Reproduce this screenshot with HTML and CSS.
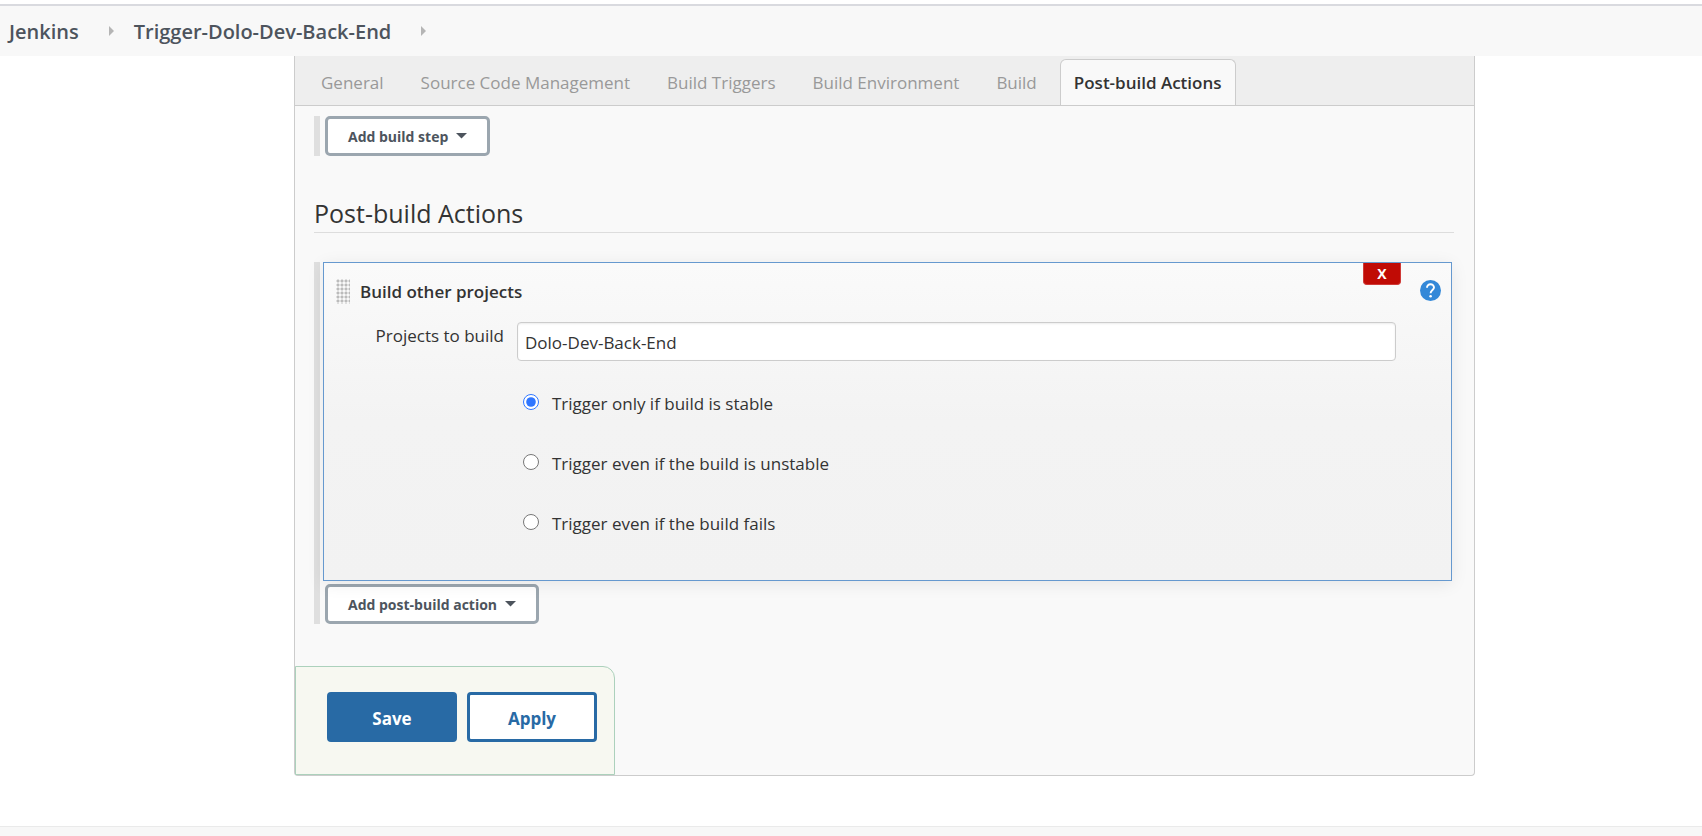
FILE: index.html
```html
<!DOCTYPE html>
<html lang="en">
<head>
<meta charset="utf-8">
<title>Trigger-Dolo-Dev-Back-End Config [Jenkins]</title>
<link rel="stylesheet" href="styles.css">
</head>
<body>
<nav class="breadcrumbs" aria-label="Breadcrumb">
  <a href="#">Jenkins</a>
  <svg class="crumb-arrow" viewBox="0 0 5 10" aria-hidden="true"><path d="M0 0L5 5L0 10Z"/></svg>
  <a href="#">Trigger-Dolo-Dev-Back-End</a>
  <svg class="crumb-arrow" viewBox="0 0 5 10" aria-hidden="true"><path d="M0 0L5 5L0 10Z"/></svg>
</nav>
<main class="config">
  <nav class="tabs" aria-label="Sections">
    <a class="tab" href="#">General</a>
    <a class="tab" href="#">Source Code Management</a>
    <a class="tab" href="#">Build Triggers</a>
    <a class="tab" href="#">Build Environment</a>
    <a class="tab" href="#">Build</a>
    <a class="tab tab-active" href="#">Post-build Actions</a>
  </nav>
  <form class="form">
    <div class="step-list">
      <button class="menu-button" type="button">Add build step <svg class="caret" viewBox="0 0 11 6" aria-hidden="true"><path d="M0 0H11L5.500 5.500Z"/></svg></button>
    </div>
    <h2 class="section-title">Post-build Actions</h2>
    <div class="step-list">
      <section class="card">
        <button class="delete" type="button">X</button>
        <header class="card-head">
          <span class="grip"></span>
          <h3 class="card-title">Build other projects</h3>
          <button class="help" type="button" aria-label="Help">
            <svg viewBox="0 0 21 21" aria-hidden="true"><circle cx="10.5" cy="10.5" r="10.5" fill="#3388d8"/><path d="M7 7.7C7 5.5 8.5 4.2 10.5 4.2S14 5.600 14 7.500C14 9.800 10.600 10.200 10.600 13.200" fill="none" stroke="#fff" stroke-width="1.900"/><circle cx="10.600" cy="16.300" r="1.300" fill="#fff"/></svg>
          </button>
        </header>
        <div class="field">
          <label class="field-label" for="projects">Projects to build</label>
          <input class="text-input" id="projects" type="text" value="Dolo-Dev-Back-End">
        </div>
        <div class="options">
          <label class="option"><input class="radio" type="radio" name="threshold" checked><span>Trigger only if build is stable</span></label>
          <label class="option"><input class="radio" type="radio" name="threshold"><span>Trigger even if the build is unstable</span></label>
          <label class="option"><input class="radio" type="radio" name="threshold"><span>Trigger even if the build fails</span></label>
        </div>
      </section>
      <button class="menu-button" type="button">Add post-build action <svg class="caret" viewBox="0 0 11 6" aria-hidden="true"><path d="M0 0H11L5.500 5.500Z"/></svg></button>
    </div>
  </form>
  <div class="actions">
    <button class="action save" type="button">Save</button>
    <button class="action apply" type="button">Apply</button>
  </div>
</main>
<footer class="footer"></footer>
</body>
</html>
```
FILE: styles.css
```css
* {
  box-sizing: border-box;
}

html,
body {
  height: 100%;
}

body {
  margin: 0;
  padding-top: 4px;
  display: flex;
  flex-direction: column;
  background: #fff;
  color: #333;
  font-family: "Open Sans", "Noto Sans", sans-serif;
  font-size: 17px;
  line-height: 24px;
}

button,
input {
  font: inherit;
}

a {
  color: inherit;
  text-decoration: none;
}

.breadcrumbs {
  display: flex;
  align-items: center;
  gap: 30px;
  height: 52px;
  padding: 2px 9px 0;
  border-top: 2px solid #d9dadf;
  background: #f8f8f8;
  color: #4d545d;
  font-size: 20px;
  font-weight: 600;
}

.crumb-arrow {
  width: 5px;
  height: 10px;
  margin: 0 -10px 2px 0;
  fill: #b5b5b5;
}

.config {
  margin: 0 227px 0 294px;
  border: 1px solid #ccc;
  border-top: 0;
  border-radius: 0 0 4px 4px;
  background: #f9f9f9;
}

.tabs {
  display: flex;
  gap: 9px;
  height: 50px;
  padding: 3px 12px 0;
  border-bottom: 1px solid #ccc;
  background: #eee;
  color: #999;
}

.tab {
  padding: 11px 13px 0;
  border: 1px solid transparent;
  border-bottom: 0;
  white-space: nowrap;
}

.tab-active {
  border-color: #ccc;
  border-radius: 6px 6px 0 0;
  background: #f9f9f9;
  color: #333;
  font-weight: 600;
}

.form {
  padding: 10px 20px 42px 19px;
}

.step-list {
  padding-left: 3px;
  border-left: 6px solid #dfdfdf;
}

.menu-button {
  display: flex;
  align-items: center;
  gap: 8px;
  height: 40px;
  margin-left: 2px;
  padding: 1px 20px 0;
  border: 3px solid #9ba6af;
  border-radius: 5px;
  background: #fff;
  color: #4d545d;
  font-size: 14px;
  font-weight: 700;
}

.caret {
  width: 11px;
  height: 6px;
  margin-bottom: 1px;
  fill: #4d545d;
}

.section-title {
  margin: 40px 0 29px;
  padding-bottom: 1px;
  border-bottom: 1px solid #ddd;
  font-size: 25px;
  font-weight: 400;
  line-height: 35px;
}

.card {
  position: relative;
  margin: 0 2px 3px 0;
  padding: 16px 10px 26px 12px;
  border: 1px solid #6699cf;
  background: linear-gradient(#fafafa, #f3f3f3 50%, #f2f2f2);
  box-shadow: 0 3px 16px rgba(0, 0, 0, 0.08);
}

.delete {
  position: absolute;
  top: 0;
  right: 50px;
  width: 38px;
  height: 22px;
  padding: 0;
  border: 1px solid #cf3a37;
  border-top: 0;
  border-radius: 0 0 4px 4px;
  background: #c00b05;
  color: #fff;
  font-size: 14px;
  font-weight: 700;
  line-height: 20px;
}

.card-head {
  display: flex;
  align-items: center;
  height: 25px;
}

.grip {
  width: 14px;
  height: 25px;
  background: radial-gradient(circle, #bbb 1px, transparent 2px) 0 0 / 4px 4px;
}

.card-title {
  flex: 1;
  margin: 0 0 0 10px;
  font-size: 17px;
  font-weight: 600;
}

.help {
  width: 21px;
  height: 21px;
  margin-bottom: 2px;
  padding: 0;
  border: 0;
  background: none;
}

.help svg {
  display: block;
  width: 21px;
  height: 21px;
}

.field {
  display: grid;
  grid-template-columns: 168px 1fr;
  column-gap: 13px;
  margin: 18px 45px 0 0;
}

.field-label {
  padding-top: 2px;
  text-align: right;
}

.text-input {
  min-width: 0;
  height: 39px;
  padding: 1px 7px 0;
  border: 1px solid #ccc;
  border-radius: 4px;
  background: #fff;
  box-shadow: inset 0 1px 2px rgba(0, 0, 0, 0.08);
  color: #333;
}

.options {
  padding: 13px 0 0 187px;
}

.option {
  display: flex;
  align-items: center;
  gap: 13px;
  height: 60px;
}

.radio {
  width: 16px;
  height: 16px;
  margin: 0 0 4px;
  accent-color: #2f76ff;
}

.actions {
  display: flex;
  gap: 10px;
  width: 320px;
  padding: 25px 17px 32px 31px;
  border: 1px solid #acd1bc;
  border-radius: 0 12px 0 0;
  background: #f7f8f1;
}

.action {
  flex: 1;
  height: 50px;
  padding: 3px 0 0;
  border: 3px solid #286aa5;
  border-radius: 4px;
  font-weight: 700;
}

.save {
  background: #286aa5;
  color: #fff;
}

.apply {
  background: #fff;
  color: #286aa5;
}

.footer {
  height: 10px;
  margin-top: auto;
  border-top: 1px solid #eaeaea;
  background: #f7f7f7;
}
```
